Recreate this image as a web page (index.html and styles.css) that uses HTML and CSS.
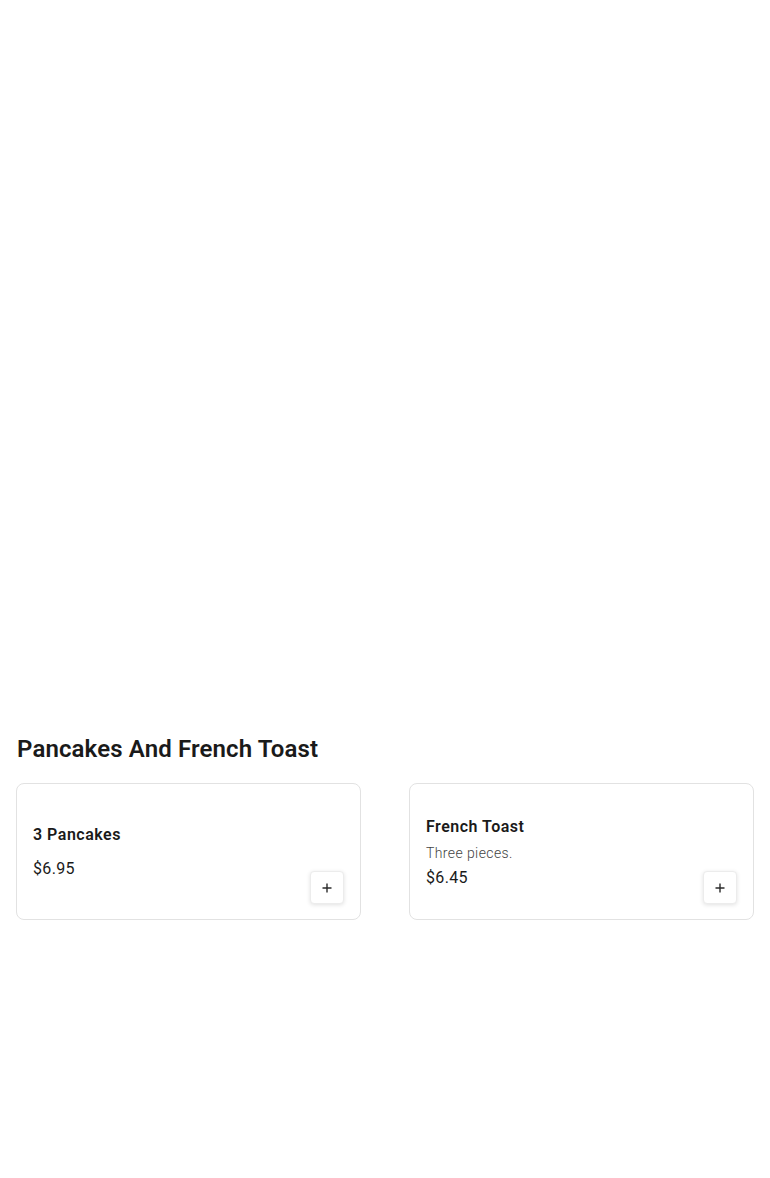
FILE: index.html
```html
<!DOCTYPE html>
<html lang="en">
<head>
<meta charset="utf-8">
<title>Menu</title>
<link rel="stylesheet" href="styles.css">
</head>
<body>
<main class="page">
  <div class="hero"></div>
  <section class="category">
    <h2 class="category-title">Pancakes And French Toast</h2>
    <div class="grid">
      <article class="card">
        <div class="card-info">
          <h3 class="item-name">3 Pancakes</h3>
          <p class="item-price item-price--solo">$6.95</p>
        </div>
        <button class="add-btn" aria-label="Add">
          <svg width="12" height="12" viewBox="0 0 12 12"><path d="M6 1.5v9M1.5 6h9" stroke="#2b2b2b" stroke-width="1.4" fill="none"/></svg>
        </button>
      </article>
      <article class="card">
        <div class="card-info">
          <h3 class="item-name">French Toast</h3>
          <p class="item-desc">Three pieces.</p>
          <p class="item-price">$6.45</p>
        </div>
        <button class="add-btn" aria-label="Add">
          <svg width="12" height="12" viewBox="0 0 12 12"><path d="M6 1.5v9M1.5 6h9" stroke="#2b2b2b" stroke-width="1.4" fill="none"/></svg>
        </button>
      </article>
    </div>
  </section>
</main>
</body>
</html>
```
FILE: styles.css
```css
* { box-sizing: border-box; }
html, body { margin: 0; padding: 0; background: #fff; }
body { font-family: Roboto, "Liberation Sans", Arial, sans-serif; color: #1c1c1c; }
.page { padding: 0 16px; }
.hero { height: 733px; }
.category-title {
  margin: 0 0 18px;
  font-size: 24px;
  line-height: 32px;
  font-weight: 600;
  letter-spacing: 0.13px;
  color: #1a1a1a;
  padding-left: 1px;
}
.grid {
  display: grid;
  grid-template-columns: 1fr 1fr;
  column-gap: 48px;
}
.card {
  display: flex;
  align-items: center;
  justify-content: space-between;
  min-height: 137px;
  border: 1px solid #e2e2e2;
  border-radius: 8px;
  padding: 16px;
  position: relative;
  background: #fff;
}
.card-info { display: flex; flex-direction: column; }
.item-name {
  margin: 0 0 4px;
  font-size: 16px;
  line-height: 24px;
  font-weight: 600;
  letter-spacing: 0.5px;
  color: #1a1a1a;
}
.item-desc {
  margin: 0 0 4px;
  font-size: 14px;
  line-height: 20px;
  font-weight: 300;
  letter-spacing: 0.4px;
  color: #444;
}
.item-price {
  margin: 0;
  font-size: 16px;
  line-height: 22px;
  letter-spacing: 0.35px;
  color: #1a1a1a;
}
.item-price--solo { margin-top: 7px; }
.add-btn {
  align-self: flex-end;
  width: 34px;
  height: 33px;
  margin-bottom: -1px;
  display: flex;
  align-items: center;
  justify-content: center;
  background: #fff;
  border: 1px solid #ececec;
  border-radius: 4px;
  box-shadow: 0 1px 4px rgba(0,0,0,0.12);
  padding: 0;
  cursor: pointer;
}
```
